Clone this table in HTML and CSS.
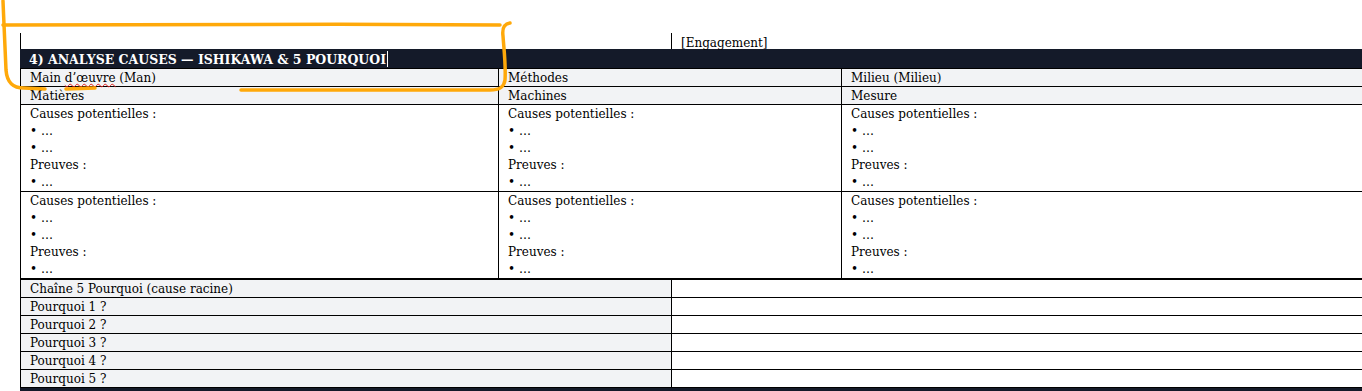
FILE: index.html
```html
<!DOCTYPE html>
<html lang="fr">
<head>
  <meta charset="UTF-8">
  <meta name="viewport" content="width=device-width, initial-scale=1.0">
  <title>Analyse causes</title>
  <link rel="stylesheet" href="styles.css">
</head>
<body>
  <div class="page">
    <!-- fin du tableau précédent -->
    <table class="doc prev">
      <colgroup><col class="w-half"><col></colgroup>
      <tr>
        <td></td>
        <td>[Engagement]</td>
      </tr>
    </table>

    <div class="band">4) ANALYSE CAUSES — ISHIKAWA &amp; 5 POURQUOI<span class="caret"></span></div>

    <table class="doc ishikawa">
      <colgroup><col class="w-man"><col class="w-meth"><col></colgroup>
      <tr class="shade">
        <td>Main <span class="spell">d’œuvre</span> (Man)</td>
        <td>Méthodes</td>
        <td>Milieu (Milieu)</td>
      </tr>
      <tr class="shade">
        <td>Matières</td>
        <td>Machines</td>
        <td>Mesure</td>
      </tr>
      <tr class="block">
        <td>Causes potentielles :<br>• …<br>• …<br>Preuves :<br>• …</td>
        <td>Causes potentielles :<br>• …<br>• …<br>Preuves :<br>• …</td>
        <td>Causes potentielles :<br>• …<br>• …<br>Preuves :<br>• …</td>
      </tr>
      <tr class="block">
        <td>Causes potentielles :<br>• …<br>• …<br>Preuves :<br>• …</td>
        <td>Causes potentielles :<br>• …<br>• …<br>Preuves :<br>• …</td>
        <td>Causes potentielles :<br>• …<br>• …<br>Preuves :<br>• …</td>
      </tr>
    </table>

    <table class="doc why">
      <colgroup><col class="w-half"><col></colgroup>
      <tr><td class="shade">Chaîne 5 Pourquoi (cause racine)</td><td></td></tr>
      <tr><td class="shade">Pourquoi 1 ?</td><td></td></tr>
      <tr><td class="shade">Pourquoi 2 ?</td><td></td></tr>
      <tr><td class="shade">Pourquoi 3 ?</td><td></td></tr>
      <tr><td class="shade">Pourquoi 4 ?</td><td></td></tr>
      <tr><td class="shade">Pourquoi 5 ?</td><td></td></tr>
    </table>

    <div class="band">5) PLAN D’ACTIONS — CORRECTIVES, PRÉVENTIVES &amp; EFFICACITÉ</div>

    <!-- surlignage à main levée -->
    <svg class="ink" width="530" height="100" viewBox="0 0 530 100">
      <path d="M3 1 C4 25 5 50 6 70 C7 82 12 88 24 88 L45 89"/>
      <path d="M3 25 C120 24 330 24 500 25"/>
      <path d="M510 23 C504 24 502 28 503 36 C504 50 506 66 505 80 C504 87 500 90 490 90 L241 90"/>
      <path d="M66 89 L95 88"/>
    </svg>
  </div>
</body>
</html>
```

FILE: styles.css
```css
body {
  margin: 0;
  height: 391px;
  overflow: hidden;
  background-color: #fff;
  color: #000;
  font-family: "DejaVu Serif", serif;
  font-size: 12px;
  line-height: 17px;
}

.page {
  position: relative;
  width: 1350px;
  padding: 33px 0 0 20px;
}

.doc {
  width: 1350px;
  border-collapse: collapse;
  table-layout: fixed;
}

.doc td {
  border: 1px solid #000;
  padding: 2px 9px 0;
  line-height: 15px;
  vertical-align: top;
}

.w-half {
  width: 651px;
}

.w-man {
  width: 478px;
}

.w-meth {
  width: 343px;
}

.prev td {
  height: 12px;
  padding-top: 4px;
  line-height: 12px;
  border-top: none;
  border-bottom: none;
}

.shade,
.shade td {
  background-color: #f2f3f5;
}

.block td {
  height: 85px;
  padding-top: 1px;
  line-height: 17px;
}

.why td {
  height: 15px;
}

.spell {
  text-decoration: underline wavy #e02020;
  text-decoration-thickness: 1px;
  text-underline-offset: 1px;
}

.band {
  height: 19px;
  padding-left: 9px;
  background-color: #141a29;
  color: #fff;
  font-weight: bold;
  font-size: 12.5px;
  line-height: 22px;
  white-space: nowrap;
}

.caret {
  display: inline-block;
  width: 1px;
  height: 16px;
  margin-left: 1px;
  vertical-align: -3px;
  background-color: #fff;
}

.ink {
  position: absolute;
  top: 0;
  left: 0;
  pointer-events: none;
}

.ink path {
  fill: none;
  stroke: #ffa90a;
  stroke-width: 3.5;
  stroke-linecap: round;
  stroke-linejoin: round;
}
```
